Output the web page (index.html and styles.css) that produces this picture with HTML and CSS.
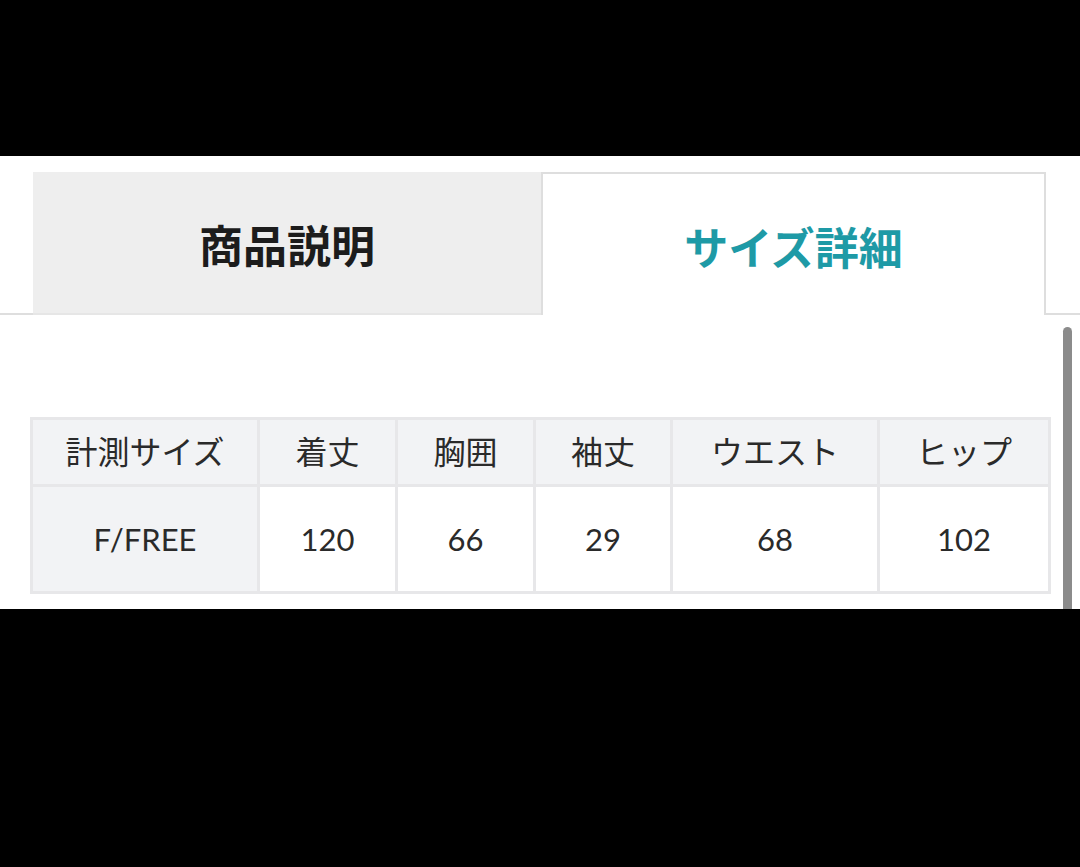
FILE: index.html
```html
<!DOCTYPE html>
<html lang="ja">
<head>
<meta charset="utf-8">
<title>サイズ詳細</title>
<link rel="stylesheet" href="styles.css">
</head>
<body>
<div class="band-top"></div>
<div class="panel">
  <div class="tabs">
    <div class="tab-spacer left"></div>
    <div class="tab inactive">商品説明</div>
    <div class="tab active">サイズ詳細</div>
    <div class="tab-spacer right"></div>
  </div>
  <div class="content">
    <table class="size-table">
      <colgroup>
        <col class="c1"><col class="c2"><col class="c3"><col class="c4"><col class="c5"><col class="c6">
      </colgroup>
      <tr class="head">
        <th>計測サイズ</th><th>着丈</th><th>胸囲</th><th>袖丈</th><th>ウエスト</th><th>ヒップ</th>
      </tr>
      <tr class="data">
        <th>F/FREE</th><td>120</td><td>66</td><td>29</td><td>68</td><td>102</td>
      </tr>
    </table>
  </div>
  <div class="scrollbar"></div>
</div>
<div class="band-bottom"></div>
</body>
</html>
```

FILE: styles.css
```css
html, body {
  margin: 0;
  padding: 0;
  background: #000;
  width: 1080px;
  height: 867px;
  overflow: hidden;
}
body {
  font-family: "Lato", "Noto Sans CJK JP", sans-serif;
}
.band-top {
  height: 156px;
  background: #000;
}
.panel {
  position: relative;
  height: 453px;
  background: #fff;
}
.tabs {
  display: flex;
  padding-top: 16px;
  height: 143px;
}
.tab-spacer {
  align-self: flex-end;
  height: 0;
  border-bottom: 2px solid #dedede;
}
.tab-spacer.left {
  width: 33px;
}
.tab-spacer.right {
  flex: 1;
}
.tab {
  display: flex;
  align-items: center;
  justify-content: center;
  font-family: "Noto Sans CJK JP", sans-serif;
  font-weight: 700;
  font-size: 44px;
  padding-top: 2px;
  box-sizing: border-box;
}
.tab.inactive {
  width: 508px;
  background: #eeeeee;
  color: #1c1c1c;
  border-bottom: 2px solid #e6e6e6;
}
.tab.active {
  width: 505px;
  background: #fff;
  color: #1e9aa6;
  border: 2px solid #dedede;
  border-bottom: none;
}
.content {
  padding: 102px 30px 0 30px;
}
.size-table {
  border-collapse: collapse;
  table-layout: fixed;
  width: 1018px;
  border: 3px solid #e7e7e9;
}
.c1 { width: 227px; }
.c2 { width: 138px; }
.c3 { width: 138px; }
.c4 { width: 137px; }
.c5 { width: 207px; }
.c6 { width: 171px; }
.size-table th,
.size-table td {
  border: 3px solid #e7e7e9;
  text-align: center;
  font-weight: 400;
  font-size: 31px;
  color: #2a2a2a;
  padding: 0;
}
.size-table tr.head th {
  height: 60px;
  padding-bottom: 4px;
  background: #f2f3f5;
  font-size: 32px;
}
.size-table tr.data th,
.size-table tr.data td {
  height: 104px;
}
.size-table tr.data th {
  background: #f2f3f5;
}
.size-table tr.data td {
  background: #fff;
}
.scrollbar {
  position: absolute;
  right: 8px;
  top: 171px;
  bottom: 0;
  width: 9px;
  background: #8b8b8b;
  border-radius: 5px 5px 0 0;
}
.band-bottom {
  height: 258px;
  background: #000;
}
```
